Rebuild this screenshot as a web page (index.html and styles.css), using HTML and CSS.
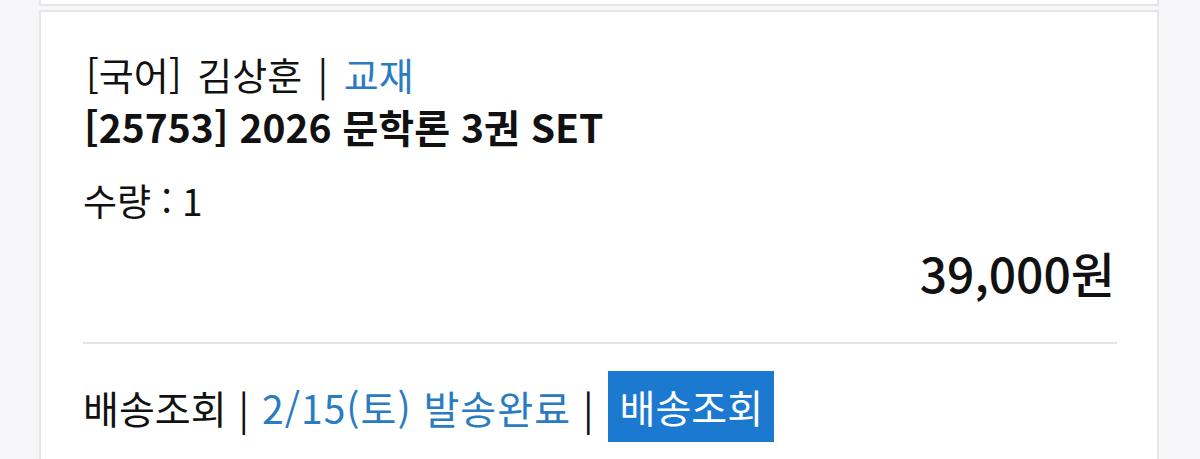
FILE: index.html
```html
<!DOCTYPE html>
<html lang="ko">
<head>
<meta charset="utf-8">
<link rel="stylesheet" href="styles.css">
</head>
<body>
<div class="page">
  <div class="card card-prev"></div>
  <div class="card card-item">
    <div class="info">
      <div class="line-cat">[국어] 김상훈 | <span class="blue">교재</span></div>
      <div class="line-title">[25753] 2026 문학론 3권 SET</div>
      <div class="line-qty">수량 : 1</div>
      <div class="line-price">39,000원</div>
    </div>
    <div class="divider"></div>
    <div class="ship">
      <span class="ship-label">배송조회</span>
      <span class="sep sep-first">|</span>
      <span class="blue ship-status">2/15(토) 발송완료</span>
      <span class="sep sep-last">|</span>
      <span class="btn">배송조회</span>
    </div>
  </div>
</div>
</body>
</html>
```

FILE: styles.css
```css
* { box-sizing: border-box; }
html, body { margin: 0; padding: 0; }
body {
  background: #f6f6f8;
  font-family: "Noto Sans CJK KR", "Noto Sans", sans-serif;
  color: #111;
  height: 459px;
  overflow: hidden;
}
.page {
  padding: 0 41px 0 39px;
  display: flex;
  flex-direction: column;
  gap: 4px;
}
.card {
  background: #fff;
  border: 2px solid #e6e6e6;
}
.card-prev {
  height: 6px;
  border-top: none;
}
.card-item {
  padding: 0 40px 0 42px;
  height: 460px;
}
.info {
  padding-top: 35px;
}
.line-cat {
  font-size: 38px;
  line-height: 53px;
  padding-left: 3px;
  word-spacing: 5px;
}
.line-title {
  font-size: 39px;
  line-height: 53px;
  font-weight: 600;
  padding-left: 1px;
}
.line-qty {
  font-size: 37px;
  line-height: 53px;
  margin-top: 21px;
}
.line-price {
  text-align: right;
  font-size: 48px;
  font-weight: 500;
  line-height: 56px;
  margin-top: 17px;
  padding-right: 2px;
}
.blue { color: #2a7cc2; }
.divider {
  height: 2px;
  background: #e4e4e4;
  margin-top: 42px;
}
.ship {
  display: flex;
  align-items: center;
  margin-top: 27px;
  font-size: 39px;
}
.sep-first { margin-left: 12px; margin-right: 13px; }
.ship-status { letter-spacing: 1px; }
.sep-last { margin-left: 12px; margin-right: 14px; }
.btn {
  background: #1b7ad0;
  color: #fff;
  padding: 0 11px 0 12px;
  line-height: 71px;
  height: 71px;
}
```
